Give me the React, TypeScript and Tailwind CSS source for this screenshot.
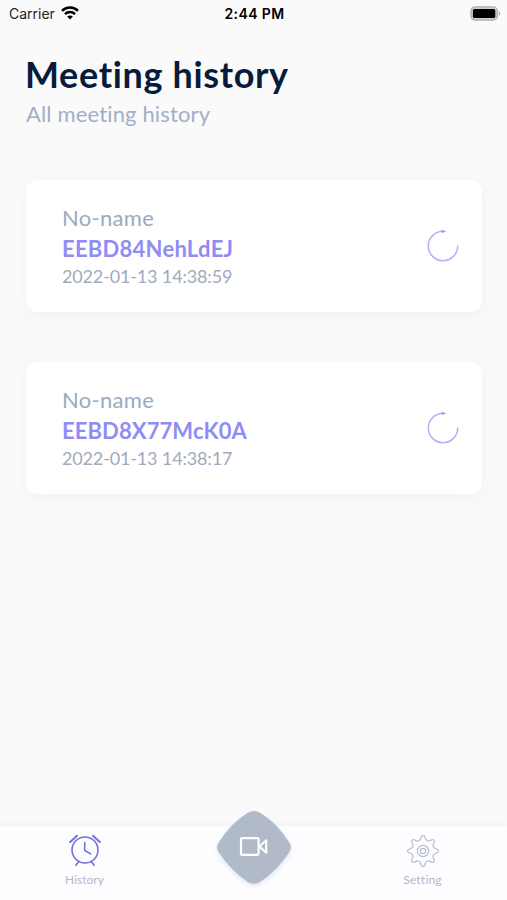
interface Meeting {
  name: string;
  code: string;
  date: string;
  codeClass: string;
}

const meetings: Meeting[] = [
  { name: 'No-name', code: 'EEBD84NehLdEJ', date: '2022-01-13 14:38:59', codeClass: 'tracking-[0.25px]' },
  { name: 'No-name', code: 'EEBD8X77McK0A', date: '2022-01-13 14:38:17', codeClass: 'tracking-[0.1px]' },
];

function gearPath(cx: number, cy: number) {
  const at = (deg: number, r: number) => {
    const a = ((deg - 90) * Math.PI) / 180;
    return `${(cx + r * Math.cos(a)).toFixed(2)} ${(cy + r * Math.sin(a)).toFixed(2)}`;
  };
  let d = `M${at(-5, 15)}`;
  for (let i = 0; i < 8; i++) {
    const t = i * 45;
    d += `Q${at(t, 16)} ${at(t + 5, 15)}`;
    d += `L${at(t + 10, 13)}`;
    d += `C${at(t + 15, 10.6)} ${at(t + 30, 10.6)} ${at(t + 35, 13)}`;
    d += `L${at(t + 40, 15)}`;
  }
  return d + 'Z';
}

function WifiIcon() {
  return (
    <svg width="18" height="14" viewBox="0 0 18 14" fill="none" stroke="#000" strokeWidth="2.5">
      <path d="M1 4.9C5.4.4 12.6.4 17 4.9" />
      <path d="M4 8.1c2.8-2.8 7.2-2.8 10 0" />
      <path d="M9 13.4 6.1 10.5c1.6-1.5 4.2-1.5 5.8 0Z" fill="#000" stroke="none" />
    </svg>
  );
}

function BatteryIcon() {
  return (
    <svg className="-mt-[2px]" width="31" height="15" viewBox="0 0 31 15">
      <rect x="0.9" y="0.9" width="26.4" height="13.2" rx="4" fill="#d0d0d0" stroke="#acacac" strokeWidth="1.2" />
      <rect x="2.9" y="2.9" width="22.4" height="9.2" rx="1.6" fill="#000" />
      <path d="M28.8 5.2c2 .7 2 3.7 0 4.4Z" fill="#acacac" />
    </svg>
  );
}

function SpinnerIcon() {
  return (
    <svg width="34" height="34" viewBox="0 0 34 34" fill="none" stroke="#b8aff4" strokeWidth="1.5">
      <path d="M31.7 17A14.7 14.7 0 1 1 17 2.3" strokeLinecap="round" />
      <path d="M15.7.7 20.4 2.4 15.7 4Z" fill="#a195ee" stroke="none" />
    </svg>
  );
}

function AlarmIcon() {
  return (
    <svg width="32" height="32" viewBox="0 0 32 32" fill="none" stroke="#7471d8" strokeWidth="1.6" strokeLinecap="round">
      <circle cx="16" cy="16" r="13" />
      <path d="M15.7 8.5v8l6 3.4" />
      <path d="M1.2 8 8 1.8M24 1.8 30.8 8" strokeWidth="2" />
      <path d="m9.8 27.4-3 3.8M22.2 27.4l3 3.8" />
    </svg>
  );
}

function GearIcon() {
  return (
    <svg width="34" height="34" viewBox="0 0 34 34" fill="none" stroke="#b5bdcf" strokeWidth="1.2" strokeLinejoin="round">
      <path d={gearPath(17, 17)} />
      <circle cx="17" cy="17" r="5.6" />
      <circle cx="17" cy="17" r="2.7" />
    </svg>
  );
}

function MeetingCard({ meeting }: { meeting: Meeting }) {
  return (
    <div className="flex h-[132px] items-center justify-between rounded-xl bg-white pr-[22px] pl-9 shadow-[0_4px_14px_rgba(90,90,190,0.055)]">
      <div className="whitespace-nowrap">
        <p className="-mt-px text-[22px] leading-[30px] tracking-[0.3px] text-[#9aaac3]">{meeting.name}</p>
        <p className={`text-[22px] leading-[31px] font-bold text-[#8f8df4] ${meeting.codeClass}`}>{meeting.code}</p>
        <p className="text-[18px] leading-6 tracking-[-0.15px] text-[#9faabe]">{meeting.date}</p>
      </div>
      <SpinnerIcon />
    </div>
  );
}

export default function App() {
  return (
    <div className="flex h-[900px] w-[507px] flex-col overflow-hidden bg-[#fafafa] font-['Lato',sans-serif] [font-variant-ligatures:none]">
      <header className="grid h-7 grid-cols-3 items-center pr-[6px] pl-[9px] font-['Inter',sans-serif] text-[14px] text-black">
        <div className="flex items-center gap-[6px] pb-[2px]">
          <span className="text-[#222]">Carrier</span>
          <WifiIcon />
        </div>
        <span className="pr-px pb-[2px] text-center font-semibold tracking-[0.4px]">2:44 PM</span>
        <div className="flex justify-end">
          <BatteryIcon />
        </div>
      </header>

      <main className="flex-1 pr-[25px] pl-[26px] pt-6">
        <h1 className="-ml-px text-[36px] leading-[44px] font-bold tracking-[0.65px] whitespace-nowrap text-[#061c3a]">
          Meeting history
        </h1>
        <p className="pt-[3px] text-[22px] leading-[30px] tracking-[0.15px] whitespace-nowrap text-[#a2aec8]">
          All meeting history
        </p>
        <div className="mt-[51px] flex flex-col gap-[50px]">
          {meetings.map((meeting) => (
            <MeetingCard key={meeting.code} meeting={meeting} />
          ))}
        </div>
      </main>

      <nav className="grid h-[74px] grid-cols-3 bg-[#fdfdff] shadow-[0_-2px_4px_rgba(110,110,210,0.06)]">
        <div className="flex flex-col items-center pt-[8px]">
          <AlarmIcon />
          <span className="mt-[6px] text-[12px] leading-4 text-[#b2b8c6]">History</span>
        </div>
        <div className="flex justify-center">
          <svg className="-mt-[18px] shrink-0 drop-shadow-[0_2px_2px_rgba(100,110,190,0.2)]" width="80" height="80" viewBox="0 0 80 80">
            <path
              d="M34 4.8Q40 1.4 46 4.8Q63 15 75 34Q78.6 39.3 75 44.6Q63 63 46 74Q40 77.6 34 74Q17 63 5 44.6Q1.4 39.3 5 34Q17 15 34 4.8Z"
              fill="#b0bac9"
            />
            <g fill="none" stroke="#fff" strokeWidth="2.2" strokeLinejoin="round">
              <rect x="27" y="30.2" width="17.6" height="16.6" rx="1" />
              <path d="m45.4 38.5 6.8-6.2v12.4Z" />
            </g>
          </svg>
        </div>
        <div className="flex flex-col items-center pt-[8px]">
          <GearIcon />
          <span className="mt-[4px] text-[12px] leading-4 tracking-[0.2px] text-[#b2b8c6]">Setting</span>
        </div>
      </nav>
    </div>
  );
}
